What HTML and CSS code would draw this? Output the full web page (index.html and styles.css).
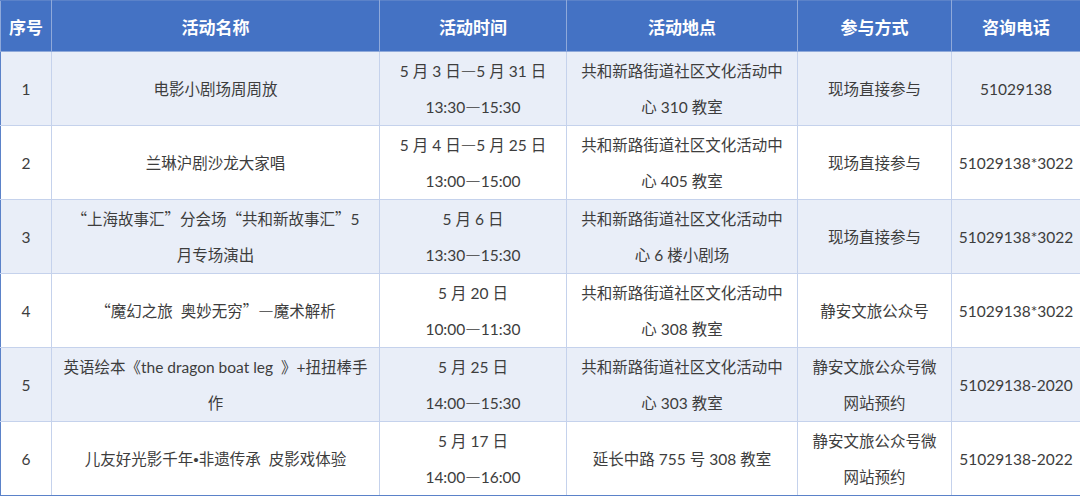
FILE: index.html
```html
<!DOCTYPE html>
<html lang="zh">
<head>
<meta charset="utf-8">
<link rel="stylesheet" href="styles.css">
</head>
<body>
<table class="schedule">
  <colgroup>
    <col class="c-no"><col class="c-name"><col class="c-time"><col class="c-place"><col class="c-way"><col class="c-tel">
  </colgroup>
  <thead>
    <tr><th>序号</th><th>活动名称</th><th>活动时间</th><th>活动地点</th><th>参与方式</th><th>咨询电话</th></tr>
  </thead>
  <tbody>
    <tr class="alt">
      <td>1</td><td>电影小剧场周周放</td>
      <td>5 月 3 日<span class="p">—</span>5 月 31 日<br>13:30<span class="p">—</span>15:30</td>
      <td>共和新路街道社区文化活动中<br>心 310 教室</td>
      <td>现场直接参与</td><td>51029138</td>
    </tr>
    <tr>
      <td>2</td><td>兰琳沪剧沙龙大家唱</td>
      <td>5 月 4 日<span class="p">—</span>5 月 25 日<br>13:00<span class="p">—</span>15:00</td>
      <td>共和新路街道社区文化活动中<br>心 405 教室</td>
      <td>现场直接参与</td><td>51029138*3022</td>
    </tr>
    <tr class="alt">
      <td>3</td><td><span class="p">“</span>上海故事汇<span class="p">”</span>分会场<span class="p">“</span>共和新故事汇<span class="p">”</span>5<br>月专场演出</td>
      <td>5 月 6 日<br>13:30<span class="p">—</span>15:30</td>
      <td>共和新路街道社区文化活动中<br>心 6 楼小剧场</td>
      <td>现场直接参与</td><td>51029138*3022</td>
    </tr>
    <tr>
      <td>4</td><td><span class="p">“</span>魔幻之旅&nbsp; 奥妙无穷<span class="p">”—</span>魔术解析</td>
      <td>5 月 20 日<br>10:00<span class="p">—</span>11:30</td>
      <td>共和新路街道社区文化活动中<br>心 308 教室</td>
      <td>静安文旅公众号</td><td>51029138*3022</td>
    </tr>
    <tr class="alt">
      <td>5</td><td>英语绘本《the dragon boat leg&nbsp; 》+扭扭棒手<br>作</td>
      <td>5 月 25 日<br>14:00<span class="p">—</span>15:30</td>
      <td>共和新路街道社区文化活动中<br>心 303 教室</td>
      <td>静安文旅公众号微<br>网站预约</td><td>51029138-2020</td>
    </tr>
    <tr>
      <td>6</td><td>儿友好光影千年<span class="dot">•</span>非遗传承&nbsp; 皮影戏体验</td>
      <td>5 月 17 日<br>14:00<span class="p">—</span>16:00</td>
      <td>延长中路 755 号 308 教室</td>
      <td>静安文旅公众号微<br>网站预约</td><td>51029138-2022</td>
    </tr>
  </tbody>
</table>
</body>
</html>
```

FILE: styles.css
```css
html, body {
  margin: 0;
  padding: 0;
  background: #ffffff;
}

.schedule {
  width: 1080px;
  border-collapse: collapse;
  table-layout: fixed;
  font-family: "Lato", "Noto Sans CJK SC", sans-serif;
  color: #3d3d3d;
  border: 1px solid #5b82c9;
}

.c-no { width: 51px; }
.c-name { width: 328px; }
.c-time { width: 187px; }
.c-place { width: 231px; }
.c-way { width: 154px; }
.c-tel { width: 129px; }

.schedule th {
  height: 50px;
  padding: 0;
  background: #4472c4;
  color: #ffffff;
  font-family: "Noto Sans CJK SC", sans-serif;
  font-weight: 700;
  font-size: 17px;
  text-align: center;
  border: 1px solid #8fa9da;
  border-top-color: #5b82c9;
}

.schedule td {
  height: 73px;
  padding: 0 4px;
  font-size: 15.5px;
  line-height: 36px;
  text-align: center;
  vertical-align: middle;
  border: 1px solid #c5d2ec;
  white-space: nowrap;
}

.p {
  font-family: "Noto Sans CJK SC", sans-serif;
  line-height: 1;
}

.dot {
  font-family: "Liberation Sans", sans-serif;
  line-height: 1;
}

.schedule tr.alt td {
  background: #e9eef8;
}

.schedule tr:last-child td {
  border-bottom-color: #5b82c9;
}

.schedule td:first-child {
  border-left-color: #5b82c9;
}

.schedule td:last-child {
  border-right-color: #5b82c9;
}
```
